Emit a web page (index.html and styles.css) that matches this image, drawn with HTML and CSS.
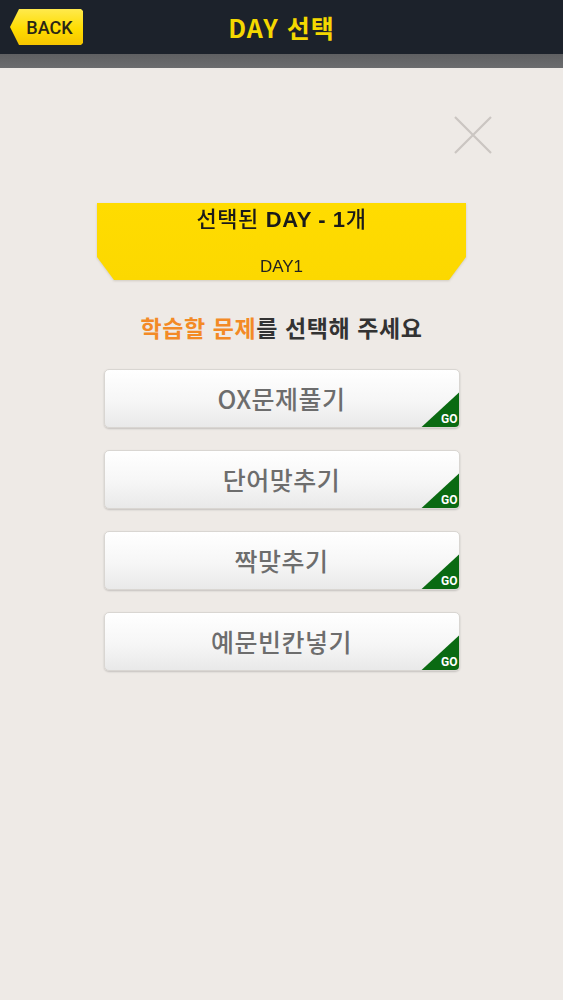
FILE: index.html
```html
<!DOCTYPE html>
<html lang="ko">
<head>
<meta charset="utf-8">
<title>DAY 선택</title>
<link rel="stylesheet" href="styles.css">
</head>
<body>
<header class="topbar">
  <button class="back">BACK</button>
  <h1 class="title">DAY 선택</h1>
</header>
<div class="subbar"></div>
<main class="content">
  <div class="close-row">
    <svg class="close" width="38" height="38" viewBox="0 0 38 38">
      <path d="M1 1 L37 37 M37 1 L1 37" stroke="#cbc6c2" stroke-width="2.2" fill="none"/>
    </svg>
  </div>
  <div class="banner-wrap">
    <div class="banner">
      <div class="banner-title">선택된 <b>DAY - 1</b>개</div>
      <div class="banner-day">DAY1</div>
    </div>
  </div>
  <p class="prompt"><span class="accent">학습할 문제</span>를 선택해 주세요</p>
  <div class="list">
    <button class="item"><span class="label">OX문제풀기</span><span class="go">GO</span></button>
    <button class="item"><span class="label">단어맞추기</span><span class="go">GO</span></button>
    <button class="item"><span class="label">짝맞추기</span><span class="go">GO</span></button>
    <button class="item"><span class="label">예문빈칸넣기</span><span class="go">GO</span></button>
  </div>
</main>
</body>
</html>
```

FILE: styles.css
```css
* { box-sizing: border-box; }
html, body { margin: 0; padding: 0; }
body {
  width: 563px;
  min-height: 1000px;
  background: #eeeae6;
  font-family: "Noto Sans CJK KR", "Noto Sans", sans-serif;
}
.topbar {
  height: 54px;
  background: #1c222b;
  position: relative;
  display: flex;
  align-items: center;
  justify-content: center;
}
.back {
  position: absolute;
  left: 10px;
  top: 9px;
  width: 73px;
  height: 36px;
  border: 0;
  padding: 0 0 0 6px;
  background: linear-gradient(#ffea4d, #ffdc00 55%, #f5c400);
  clip-path: polygon(9px 0, calc(100% - 2px) 0, 100% 2px, 100% calc(100% - 2px), calc(100% - 2px) 100%, 9px 100%, 0 50%);
  font-family: Roboto, "Liberation Sans", sans-serif;
  font-weight: 500;
  font-size: 18px;
  color: #2a2616;
  display: flex;
  align-items: center;
  justify-content: center;
}
.title {
  margin: 0;
  font-size: 25px;
  font-weight: 700;
  color: #f4d800;
  line-height: 1;
  letter-spacing: 1px;
}
.subbar {
  height: 14px;
  background: linear-gradient(#5f6062, #6b6c6e);
}
.content {
  display: flex;
  flex-direction: column;
  align-items: center;
}
.close-row {
  width: 100%;
  display: flex;
  justify-content: flex-end;
  padding: 48px 71px 0 0;
}
.close { display: block; }
.banner-wrap {
  margin-top: 49px;
  width: 369px;
  filter: drop-shadow(0 1px 1px rgba(120, 110, 80, 0.25));
}
.banner {
  height: 77px;
  background: linear-gradient(#ffdc00, #fcd800);
  clip-path: polygon(0 0, 100% 0, 100% 70%, calc(100% - 17px) 100%, 17px 100%, 0 70%);
  display: flex;
  flex-direction: column;
  align-items: center;
}
.banner-title {
  margin-top: 3px;
  font-family: "Liberation Sans", "Noto Sans CJK KR", sans-serif;
  font-size: 22px;
  font-weight: 500;
  color: #1a1a1a;
  line-height: 28px;
  letter-spacing: 0.6px;
}
.banner-title b { font-weight: 700; }
.banner-day {
  margin-top: 23px;
  font-family: "Liberation Sans", Arial, sans-serif;
  font-size: 17px;
  color: #222;
  line-height: 20px;
}
.prompt {
  margin: 31px 0 0;
  font-size: 23px;
  font-weight: 700;
  color: #333;
  line-height: 32px;
  letter-spacing: 0.6px;
}
.accent { color: #f38a26; }
.list {
  margin-top: 26px;
  display: flex;
  flex-direction: column;
  gap: 22px;
}
.item {
  position: relative;
  width: 356px;
  height: 59px;
  border: 1px solid #d9d6d2;
  border-radius: 5px;
  background: linear-gradient(#ffffff, #f6f6f6 55%, #e9e9e9);
  box-shadow: 0 1px 2px rgba(0, 0, 0, 0.18);
  padding: 0;
  overflow: hidden;
  display: flex;
  align-items: center;
  justify-content: center;
  font-family: "Noto Sans CJK KR", "Noto Sans", sans-serif;
}
.label {
  font-size: 25px;
  font-weight: 500;
  color: #6d6d6d;
  line-height: 1;
  letter-spacing: 0.5px;
}
.go {
  position: absolute;
  right: -1px;
  bottom: -1px;
  width: 39px;
  height: 36px;
  background: #0a6a12;
  clip-path: polygon(100% 0, 100% 100%, 0 100%);
  color: #fff;
  font-family: Roboto, "Liberation Sans", sans-serif;
  font-weight: 700;
  font-size: 12px;
  line-height: 1;
  display: flex;
  align-items: flex-end;
  justify-content: flex-end;
  padding: 0 2px 3px 0;
}
```
